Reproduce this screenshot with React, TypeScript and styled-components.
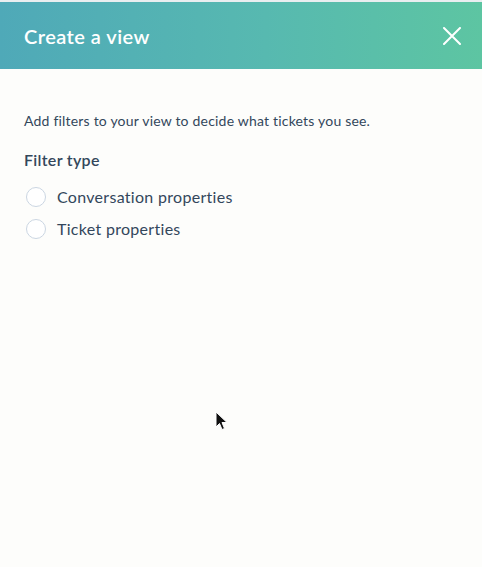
import styled, { createGlobalStyle } from "styled-components";

const GlobalStyle = createGlobalStyle`
  html, body {
    margin: 0;
    padding: 0;
    background: #fdfdfb;
  }
  body {
    font-family: Lato, "Open Sans", "Liberation Sans", sans-serif;
    color: #33475b;
  }
`;

const filterTypes = ["Conversation properties", "Ticket properties"];

export default function App() {
  return (
    <>
      <GlobalStyle />
      <Panel>
        <Header>
          <Title>Create a view</Title>
          <CloseButton aria-label="Close">
            <svg width="18" height="18" viewBox="0 0 18 18">
              <path d="M1 1L17 17M17 1L1 17" stroke="#fff" strokeWidth="2" strokeLinecap="round" />
            </svg>
          </CloseButton>
        </Header>
        <Body>
          <Intro>Add filters to your view to decide what tickets you see.</Intro>
          <Label>Filter type</Label>
          <Options>
            {filterTypes.map((type) => (
              <Option key={type}>
                <Radio />
                <OptionText>{type}</OptionText>
              </Option>
            ))}
          </Options>
        </Body>
        <Cursor width="14" height="20" viewBox="0 0 14 20">
          <path d="M1 1L1 16L4.5 12.5L7 18.5L9.5 17.5L7 11.5L12 11.5Z" fill="#111" stroke="#fff" strokeWidth="1" />
        </Cursor>
      </Panel>
    </>
  );
}

const Panel = styled.div`
  position: relative;
  width: 482px;
  height: 567px;
  background: #fdfdfb;
  border-top: 2px solid #e9eef0;
  box-sizing: border-box;
`;

const Header = styled.div`
  display: flex;
  align-items: center;
  justify-content: space-between;
  height: 67px;
  padding: 0 21px 0 24px;
  background: linear-gradient(90deg, #4fa9b8 0%, #57b9b0 55%, #5dc5a2 100%);
`;

const Title = styled.h1`
  margin: 0;
  font-size: 20px;
  font-weight: 600;
  color: #fff;
  letter-spacing: 0.45px;
`;

const CloseButton = styled.button`
  display: flex;
  padding: 0;
  border: none;
  background: none;
  cursor: pointer;
`;

const Body = styled.div`
  padding: 42px 24px 0;
`;

const Intro = styled.p`
  margin: 0;
  font-size: 14px;
  line-height: 20px;
  letter-spacing: 0.2px;
`;

const Label = styled.div`
  margin-top: 19px;
  font-size: 16px;
  font-weight: 600;
  line-height: 20px;
  letter-spacing: 0.3px;
`;

const Options = styled.div`
  margin-top: 17px;
  display: flex;
  flex-direction: column;
  gap: 12px;
`;

const Option = styled.label`
  display: flex;
  align-items: center;
  gap: 11px;
  margin-left: 2px;
  cursor: pointer;
`;

const Radio = styled.span`
  width: 18px;
  height: 18px;
  border: 1.5px solid #cbd6e2;
  border-radius: 50%;
  background: #fff;
`;

const OptionText = styled.span`
  font-size: 16px;
  line-height: 20px;
  letter-spacing: 0.3px;
`;

const Cursor = styled.svg`
  position: absolute;
  left: 215px;
  top: 409px;
`;
